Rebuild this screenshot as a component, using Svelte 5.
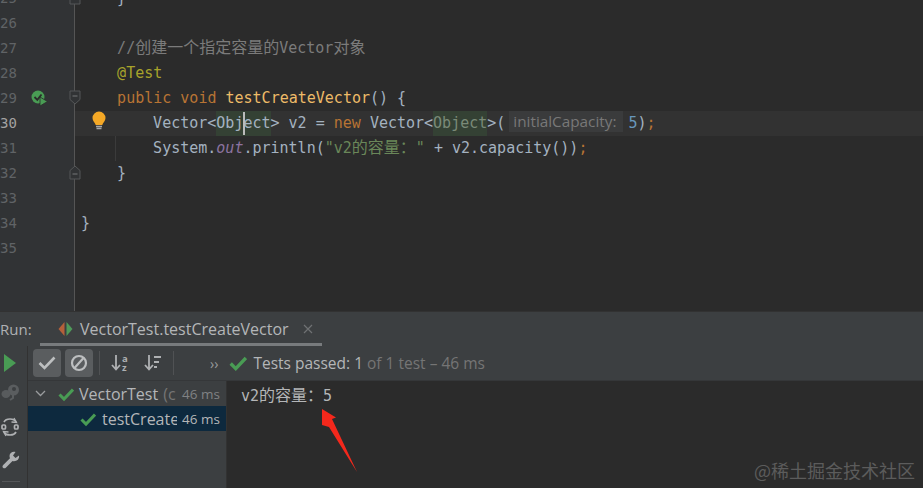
<script lang="ts">
  type Token = { c?: string; t: string };

  const lines: { n: number | string; fold?: string; run?: boolean; current?: boolean; guide?: boolean; tokens: Token[] }[] = [
    { n: 25, fold: 'end', tokens: [{ t: '    }' }] },
    { n: 26, tokens: [] },
    {
      n: 27,
      tokens: [
        { c: 'com', t: '    //' },
        { c: 'com cjk', t: '创建一个指定容量的' },
        { c: 'com', t: 'Vector' },
        { c: 'com cjk', t: '对象' },
      ],
    },
    { n: 28, tokens: [{ c: 'ann', t: '    @Test' }] },
    {
      n: 29,
      run: true,
      fold: 'start',
      tokens: [
        { c: 'kw', t: '    public void ' },
        { c: 'fn', t: 'testCreateVector' },
        { t: '() {' },
      ],
    },
    {
      n: 30,
      current: true,
      tokens: [
        { t: '    Vector<' },
        { c: 'usage', t: 'Object' },
        { t: '> v2 = ' },
        { c: 'kw', t: 'new ' },
        { t: 'Vector<' },
        { c: 'usage dim', t: 'Object' },
        { t: '>(' },
        { c: 'hint', t: 'initialCapacity:' },
        { c: 'num', t: '5' },
        { t: ')' },
        { c: 'kw', t: ';' },
      ],
    },
    {
      n: 31,
      guide: true,
      tokens: [
        { t: '    System.' },
        { c: 'field', t: 'out' },
        { t: '.println(' },
        { c: 'str', t: '"v2' },
        { c: 'str cjk', t: '的容量：' },
        { c: 'str', t: '"' },
        { t: ' + v2.capacity())' },
        { c: 'kw', t: ';' },
      ],
    },
    { n: 32, fold: 'end', tokens: [{ t: '    }' }] },
    { n: 33, tokens: [] },
    { n: 34, tokens: [{ t: '}' }] },
    { n: 35, tokens: [] },
    { n: '', tokens: [] },
    { n: '', tokens: [] },
  ];
</script>

{#snippet check(size = 16)}
  <svg class="check" width={size} height={size} viewBox="0 0 16 16">
    <path d="M1.5 8.5 L6 13 L15 3.5" fill="none" stroke="#499c54" stroke-width="3" />
  </svg>
{/snippet}

<div class="app">
  <div class="editor">
    <div class="rows">
      {#each lines as line}
        <div class="row" class:current={line.current}>
          <div class="gutter">
            <span class="num-cell" class:active={line.current}>{line.n}</span>
            {#if line.run}
              <svg class="run-mark" width="18" height="17" viewBox="0 0 18 17">
                <circle cx="7" cy="7" r="6.5" fill="#499c54" />
                <path d="M3.5 7 L6.3 9.8 L10.5 4.5" fill="none" stroke="#2b2b2b" stroke-width="1.8" />
                <path d="M9 7 L16.500 11.500 L9 16 Z" fill="#499c54" stroke="#2b2b2b" stroke-width="0.8" />
              </svg>
            {/if}
            {#if line.fold === 'start'}
              <svg class="fold" width="12" height="15" viewBox="0 0 12 15">
                <path d="M1 1 H11 V9.5 L6 14 L1 9.5 Z" fill="#313335" stroke="#555758" />
                <path d="M3.5 6 H8.5" stroke="#77797a" />
              </svg>
            {:else if line.fold === 'end'}
              <svg class="fold" width="12" height="15" viewBox="0 0 12 15">
                <path d="M1 14 H11 V5.5 L6 1 L1 5.5 Z" fill="#313335" stroke="#555758" />
                <path d="M3.5 9 H8.5" stroke="#77797a" />
              </svg>
            {/if}
          </div>
          <div class="code">
            {#if line.guide}<i class="guide"></i>{/if}
            {#if line.current}
              <svg class="bulb" width="14" height="20" viewBox="0 0 14 20">
                <path d="M7 0.5 A6.5 6.5 0 0 1 13.5 7 C13.5 10 11 11.500 10.300 14 H3.700 C3 11.500 0.500 10 0.500 7 A6.500 6.500 0 0 1 7 0.500 Z" fill="#f4a826" />
                <path d="M4 15.500 H10 M4.500 17.500 H9.500" stroke="#a7a7a7" stroke-width="1.300" />
              </svg>
              <i class="caret"></i>
            {/if}
            <div class="text" class:deep={line.current || line.guide}>{#each line.tokens as tok}<span class={tok.c}>{tok.t}</span>{/each}</div>
          </div>
        </div>
      {/each}
    </div>
  </div>

  <div class="tabbar">
    <span class="run-label">Run:</span>
    <div class="tab">
      <svg width="15" height="16" viewBox="0 0 15 16">
        <path d="M6.500 1 V15 L0.500 8 Z" fill="#b5603a" />
        <path d="M8.500 1 V15 L14.500 8 Z" fill="#4f9a5a" />
      </svg>
      <span class="tab-title">VectorTest.testCreateVector</span>
      <svg class="tab-close" width="10" height="10" viewBox="0 0 10 10">
        <path d="M1 1 L9 9 M9 1 L1 9" stroke="#6f7173" stroke-width="1.200" />
      </svg>
    </div>
  </div>

  <div class="panel">
    <aside class="strip">
      <svg width="14" height="20" viewBox="0 0 14 20"><path d="M1 1 L13 10 L1 19 Z" fill="#499c54" /></svg>
      <svg class="debug" width="20" height="18" viewBox="0 0 20 18">
        <circle cx="12.500" cy="7" r="5.500" fill="#5a5d5f" />
        <circle cx="13" cy="6" r="2" fill="#3c3f41" />
        <ellipse cx="5" cy="11" rx="4.500" ry="4" fill="#585b5d" />
        <path d="M12 12 V15 L9 17" stroke="#5a5d5f" stroke-width="2" fill="none" />
      </svg>
      <svg width="18" height="22" viewBox="0 0 18 22" fill="none" stroke="#afb1b3" stroke-width="1.700">
        <path d="M3 6 C5 2 13 2 15 6" />
        <path d="M15 16 C13 20 5 20 3 16" />
        <path d="M13 2 L15.500 6.500 L10.500 6" stroke-width="1.300" />
        <path d="M5 20 L2.500 15.500 L7.500 16" stroke-width="1.300" />
        <rect x="1" y="9" width="3.500" height="4" rx="1" />
        <rect x="13.500" y="9" width="3.500" height="4" rx="1" />
      </svg>
      <svg width="18" height="18" viewBox="0 0 18 18">
        <path d="M17 4.500 L13.500 7 L11 4.500 L13.500 1 C10.500 0 7.500 2 7.500 5 C7.500 6 7.800 6.800 8 7.300 L1.200 14 C0.300 15 0.300 16 1 16.800 C1.800 17.500 3 17.500 3.800 16.800 L10.500 10 C14 11 17.800 8.500 17 4.500 Z" fill="#afb1b3" />
      </svg>
      <i class="strip-rule"></i>
    </aside>

    <div class="main">
      <div class="toolbar">
        <button class="tool on" aria-label="Show passed">
          <svg width="18" height="14" viewBox="0 0 18 14"><path d="M1.500 7 L6.500 12 L16.500 1.500" fill="none" stroke="#bdbfc0" stroke-width="2.600" /></svg>
        </button>
        <button class="tool on" aria-label="Show ignored">
          <svg width="18" height="18" viewBox="0 0 18 18" fill="none" stroke="#bdbfc0" stroke-width="2.200">
            <circle cx="9" cy="9" r="7" />
            <path d="M4.500 14 L13.500 4" />
          </svg>
        </button>
        <i class="sep"></i>
        <svg class="sort" width="18" height="18" viewBox="0 0 18 18">
          <path d="M5 1 V15 M1 11 L5 15.500 L9 11" fill="none" stroke="#afb1b3" stroke-width="1.800" />
          <text x="11" y="7.500" class="sort-letter">a</text>
          <text x="11" y="17" class="sort-letter">z</text>
        </svg>
        <svg class="sort second" width="18" height="18" viewBox="0 0 18 18">
          <path d="M5 1 V15 M1 11 L5 15.500 L9 11" fill="none" stroke="#afb1b3" stroke-width="1.800" />
          <path d="M10 3 H17 M10 8 H15 M10 13 H13" stroke="#afb1b3" stroke-width="2" />
        </svg>
        <i class="sep last"></i>
        <span class="more">››</span>
        {@render check(18)}
        <span class="status"><b>Tests passed:</b> 1 <em>of 1 test – 46 ms</em></span>
      </div>

      <div class="body">
        <div class="tree">
          <div class="node">
            <svg class="chevron" width="11" height="7" viewBox="0 0 11 7"><path d="M1 1 L5.500 5.500 L10 1" fill="none" stroke="#9a9c9e" stroke-width="1.300" /></svg>
            {@render check(16)}
            <span class="name">VectorTest</span>
            <span class="extra">(c</span>
            <span class="time">46 ms</span>
          </div>
          <div class="node child selected">
            {@render check(16)}
            <span class="name">testCreate</span>
            <span class="time">46 ms</span>
          </div>
        </div>
        <div class="console">v2<span class="cjk">的容量：</span>5</div>
      </div>
    </div>
  </div>

  <svg class="arrow" width="40" height="68" viewBox="0 0 40 68">
    <path d="M2 1 L16 9.500 L12 11 L37 64 L9 19 L2 17 Z" fill="#f4281c" />
  </svg>
  <span class="watermark">@稀土掘金技术社区</span>
</div>

<style>
  :global(body) {
    margin: 0;
    background: #2b2b2b;
  }

  .app {
    position: relative;
    width: 923px;
    height: 488px;
    overflow: hidden;
    display: flex;
    flex-direction: column;
    background: #3c3f41;
    font-family: "Open Sans", "Noto Sans CJK SC", sans-serif;
  }

  .editor {
    height: 311px;
    flex: none;
    overflow: hidden;
    background: #2b2b2b;
  }

  .rows {
    margin-top: -14px;
  }

  .row {
    display: flex;
    height: 25px;
    font-family: "DejaVu Sans Mono", monospace;
    font-size: 15px;
    line-height: 24px;
    color: #a4b2c0;
  }

  .gutter {
    position: relative;
    flex: none;
    width: 74px;
    background: #313335;
    border-right: 1px solid #555555;
    box-sizing: content-box;
  }

  .num-cell {
    display: block;
    width: 14px;
    text-align: right;
    font-size: 14px;
    color: #606366;
  }

  .num-cell.active {
    color: #a4a3a3;
  }

  .run-mark {
    position: absolute;
    left: 31px;
    top: 4px;
  }

  .fold {
    position: absolute;
    left: 69px;
    top: 4px;
  }

  .code {
    position: relative;
    flex: 1;
    padding-left: 6px;
  }

  .text {
    white-space: pre;
  }

  .text.deep {
    padding-left: 36px;
  }

  .row.current .code {
    background: #323232;
  }

  .guide {
    position: absolute;
    left: 40px;
    top: 0;
    bottom: 0;
    width: 1px;
    background: #3b3b3b;
  }

  .bulb {
    position: absolute;
    left: 17px;
    top: 0;
  }

  .caret {
    position: absolute;
    left: 168px;
    top: 1px;
    width: 2px;
    height: 23px;
    background: #bbbbbb;
  }

  .com { color: #7b7b7b; }
  .ann { color: #a8a32b; }
  .kw { color: #b87434; }
  .fn { color: #eebb68; }
  .num { color: #6897bb; }
  .str { color: #6a8759; }
  .field { color: #8c73a0; font-style: italic; }

  .cjk {
    font-family: "Noto Sans CJK SC", sans-serif;
    font-size: 16px;
    line-height: 1;
  }

  .usage {
    display: inline-block;
    height: 25px;
    background: #344134;
  }

  .usage.dim {
    color: #7a8a78;
  }

  .hint {
    display: inline-block;
    height: 21px;
    line-height: 21px;
    margin: 0 5px 0 4px;
    padding: 0 7px 0 4px;
    background: #3a3b3c;
    color: #787878;
    font-family: "Open Sans", sans-serif;
    font-size: 15.300px;
    vertical-align: 1px;
  }

  .tabbar {
    flex: none;
    height: 35px;
    box-sizing: border-box;
    display: flex;
    align-items: center;
    border-top: 1px solid #323232;
    color: #afb1b3;
    font-size: 15px;
  }

  .run-label {
    width: 58px;
    flex: none;
  }

  .tab {
    display: flex;
    align-items: center;
    gap: 7px;
    position: relative;
    height: 100%;
  }

  .tab::after {
    content: "";
    position: absolute;
    left: -18px;
    width: 282px;
    bottom: 0;
    height: 3px;
    background: #787b7d;
  }

  .tab-title {
    color: #b4b6b8;
    font-size: 16px;
    white-space: nowrap;
  }

  .tab-close {
    margin-left: 7px;
  }

  .panel {
    flex: 1;
    display: flex;
    min-height: 0;
  }

  .strip {
    position: relative;
    flex: none;
    width: 27px;
    box-sizing: content-box;
    border-right: 1px solid #323232;
    display: flex;
    flex-direction: column;
    align-items: center;
    padding-top: 7px;
    margin-right: 0;
  }

  .strip > svg {
    margin-left: -7px;
  }

  .strip .debug { margin-top: 10px; margin-left: -6px; }
  .strip svg:nth-child(3) { margin-top: 15px; margin-left: -7px; }
  .strip svg:nth-child(4) { margin-top: 13px; margin-left: -6px; }

  .strip-rule {
    position: absolute;
    left: 2px;
    top: 135px;
    width: 18px;
    height: 1px;
    background: #555759;
  }

  .main {
    flex: 1;
    min-width: 0;
    display: flex;
    flex-direction: column;
  }

  .toolbar {
    flex: none;
    height: 35px;
    box-sizing: border-box;
    display: flex;
    align-items: center;
    padding-left: 5px;
    border-bottom: 1px solid #353739;
  }

  .tool {
    width: 28px;
    height: 28px;
    margin-right: 4px;
    padding: 0;
    border: 0;
    border-radius: 4px;
    background: #5a5d5f;
    display: flex;
    align-items: center;
    justify-content: center;
  }

  .sep {
    width: 1px;
    height: 24px;
    background: #505254;
    margin: 0 11px 0 2px;
  }

  .sep.last {
    margin: 0 0 0 11px;
  }

  .sort.second {
    margin-left: 15px;
  }

  .sort-letter {
    font-family: "Open Sans", sans-serif;
    font-size: 9.500px;
    font-weight: 700;
    fill: #afb1b3;
  }

  .more {
    margin-left: 36px;
    margin-right: 11px;
    color: #9a9c9e;
    font-size: 14px;
  }

  .status {
    margin-left: 6px;
    font-size: 15.500px;
    color: #b4b6b8;
    white-space: nowrap;
  }

  .status b {
    font-weight: 400;
  }

  .status em {
    font-style: normal;
    color: #757575;
  }

  .body {
    flex: 1;
    display: flex;
    min-height: 0;
  }

  .tree {
    flex: none;
    width: 198px;
    border-right: 1px solid #323232;
    font-size: 16px;
    color: #b4b6b8;
  }

  .node {
    position: relative;
    height: 25px;
    display: flex;
    align-items: center;
    white-space: nowrap;
  }

  .chevron {
    margin: 0 12px 0 7px;
  }

  .name {
    margin-left: 5px;
  }

  .extra {
    margin-left: 5px;
    color: #757575;
  }

  .time {
    position: absolute;
    right: 6px;
    font-size: 13.500px;
    color: #808284;
  }

  .child {
    padding-left: 52px;
    background: #0d293e;
  }

  .child .name {
    margin-left: 6px;
    width: 75px;
    overflow: hidden;
  }

  .child .time {
    color: #b4b6b8;
  }

  .console {
    flex: 1;
    background: #2b2b2b;
    padding: 2px 0 0 14px;
    font-family: "DejaVu Sans Mono", monospace;
    font-size: 15px;
    line-height: 27px;
    color: #b4b6b8;
    white-space: pre;
  }

  .arrow {
    position: absolute;
    left: 320px;
    top: 408px;
  }

  .watermark {
    position: absolute;
    right: 8px;
    bottom: 8px;
    font-family: "Noto Sans CJK SC", sans-serif;
    font-size: 18px;
    line-height: 20px;
    color: #5c5c5c;
  }
</style>
